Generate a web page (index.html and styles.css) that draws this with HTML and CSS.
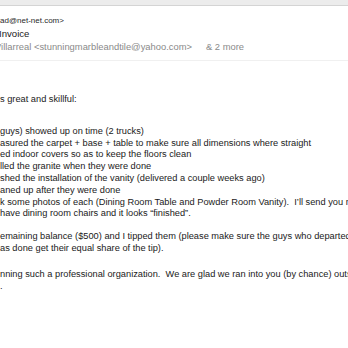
FILE: index.html
```html
<!DOCTYPE html>
<html>
<head>
<meta charset="utf-8">
<link rel="stylesheet" href="styles.css">
</head>
<body>
<div class="topbar"></div>
<header class="mail-header">
  <div class="from">ad@net-net.com&gt;</div>
  <div class="subject">Invoice</div>
  <div class="to"><span class="cut">V</span>illarreal &lt;stunningmarbleandtile@yahoo.com&gt;<span class="more">&amp; 2 more</span></div>
</header>
<main class="mail-body">
  <p class="para p1">s great and skillful:</p>
  <p class="para p2">guys) showed up on time (2 trucks)<br>asured the carpet + base + table to make sure all dimensions where straight<br>ed indoor covers so as to keep the floors clean<br>lled the granite when they were done<br>shed the installation of the vanity (delivered a couple weeks ago)<br>aned up after they were done<br>k some photos of each (Dining Room Table and Powder Room Vanity).&nbsp; I’ll send you more<br>have dining room chairs and it looks “finished”.</p>
  <p class="para p3">emaining balance ($500) and I tipped them (please make sure the guys who departed<br>as done get their equal share of the tip).</p>
  <p class="para p4">nning such a professional organization.&nbsp; We are glad we ran into you (by chance) outside<br>.</p>
</main>
</body>
</html>
```
FILE: styles.css
```css
html, body {
  margin: 0;
  padding: 0;
  background: #ffffff;
  width: 348px;
  height: 348px;
  overflow: hidden;
  font-family: "Liberation Sans", Arial, sans-serif;
}
.topbar {
  height: 5px;
  background: #ececec;
  border-bottom: 1px solid #d4d4d4;
}
.mail-header {
  padding-top: 9px;
  height: 45px;
  border-bottom: 1px solid #f0f0f0;
  white-space: nowrap;
}
.from {
  font-size: 8px;
  line-height: 12px;
  color: #2a2a2a;
}
.subject {
  font-size: 9.6px;
  line-height: 13px;
  color: #1a1a1a;
  margin-left: -1px;
}
.to {
  font-size: 9.4px;
  line-height: 13px;
  color: #8a8a8a;
  margin-left: -5px;
}
.more {
  margin-left: 14px;
}
.mail-body {
  white-space: nowrap;
  font-size: 9.25px;
  line-height: 11.8px;
  color: #1a1a1a;
}
.para {
  margin: 0;
}
.p1 { margin-top: 33px; }
.p2 { margin-top: 20px; }
.p3 { margin-top: 11px; }
.p4 { margin-top: 14px; }
```
